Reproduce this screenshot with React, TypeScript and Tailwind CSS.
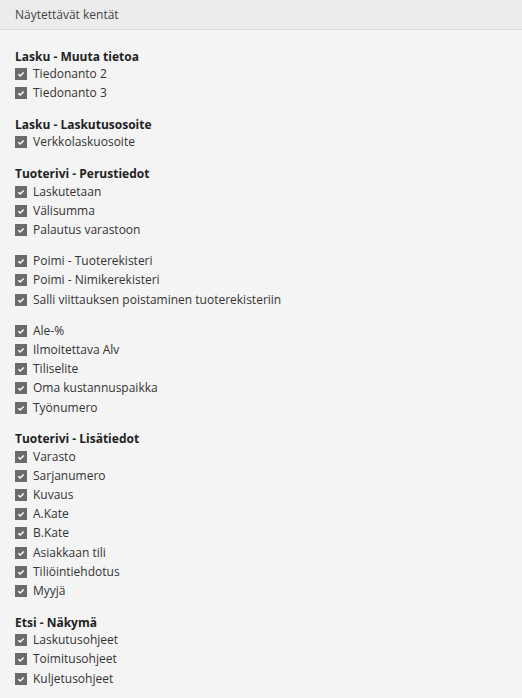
const sections: { title: string; groups: string[][] }[] = [
  { title: "Lasku - Muuta tietoa", groups: [["Tiedonanto 2", "Tiedonanto 3"]] },
  { title: "Lasku - Laskutusosoite", groups: [["Verkkolaskuosoite"]] },
  {
    title: "Tuoterivi - Perustiedot",
    groups: [
      ["Laskutetaan", "Välisumma", "Palautus varastoon"],
      ["Poimi - Tuoterekisteri", "Poimi - Nimikerekisteri", "Salli viittauksen poistaminen tuoterekisteriin"],
      ["Ale-%", "Ilmoitettava Alv", "Tiliselite", "Oma kustannuspaikka", "Työnumero"],
    ],
  },
  {
    title: "Tuoterivi - Lisätiedot",
    groups: [["Varasto", "Sarjanumero", "Kuvaus", "A.Kate", "B.Kate", "Asiakkaan tili", "Tiliöintiehdotus", "Myyjä"]],
  },
  { title: "Etsi - Näkymä", groups: [["Laskutusohjeet", "Toimitusohjeet", "Kuljetusohjeet"]] },
];

function Check({ label }: { label: string }) {
  return (
    <label className="flex items-center h-[19.2px] gap-[6px]">
      <span className="w-[12px] h-[12px] bg-[#6b6b6b] flex items-center justify-center shrink-0">
        <svg width="8" height="8" viewBox="0 0 8 8">
          <path d="M1.3 4.2 L3.2 6 L6.7 2.4" stroke="#fff" strokeWidth="1.5" fill="none" />
        </svg>
      </span>
      <span>{label}</span>
    </label>
  );
}

export default function App() {
  return (
    <div className="min-h-[698px] bg-[#f4f4f4] text-[12px] text-[#333] font-['Open_Sans',sans-serif]">
      <div className="h-[30px] bg-[#ececec] border-b border-[#dedede] flex items-center px-[15px] text-[#444]">
        Näytettävät kentät
      </div>
      <div className="px-[15px] pt-[17.5px] flex flex-col gap-[13px]">
        {sections.map((s) => (
          <div key={s.title}>
            <div className="font-bold text-[#222] leading-[17px]">{s.title}</div>
            <div className="flex flex-col gap-[12px]">
              {s.groups.map((g, i) => (
                <div key={i}>
                  {g.map((l) => (
                    <Check key={l} label={l} />
                  ))}
                </div>
              ))}
            </div>
          </div>
        ))}
      </div>
    </div>
  );
}
